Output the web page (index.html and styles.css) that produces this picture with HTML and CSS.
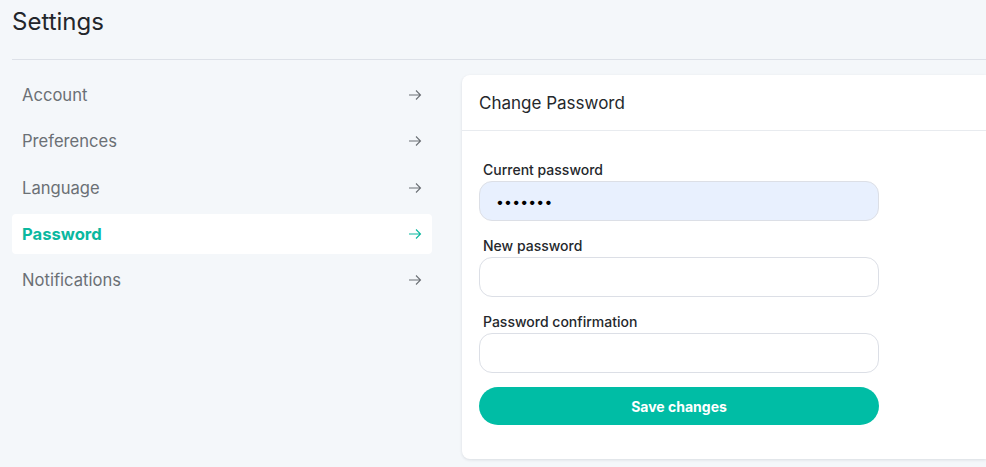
FILE: index.html
```html
<!DOCTYPE html>
<html>
<head>
<meta charset="utf-8">
<link rel="stylesheet" href="styles.css">
</head>
<body>
<header class="page-header"><h1 class="page-title">Settings</h1></header>
<main class="layout">
  <nav class="side-nav">
    <a class="nav-item">Account<svg class="arrow" viewBox="0 0 14 14"><path d="M1 7H12.5M8 2.5L12.5 7L8 11.5"/></svg></a>
    <a class="nav-item">Preferences<svg class="arrow" viewBox="0 0 14 14"><path d="M1 7H12.5M8 2.5L12.5 7L8 11.5"/></svg></a>
    <a class="nav-item">Language<svg class="arrow" viewBox="0 0 14 14"><path d="M1 7H12.5M8 2.5L12.5 7L8 11.5"/></svg></a>
    <a class="nav-item active">Password<svg class="arrow" viewBox="0 0 14 14"><path d="M1 7H12.5M8 2.5L12.5 7L8 11.5"/></svg></a>
    <a class="nav-item">Notifications<svg class="arrow" viewBox="0 0 14 14"><path d="M1 7H12.5M8 2.5L12.5 7L8 11.5"/></svg></a>
  </nav>
  <section class="card">
    <div class="card-header">Change Password</div>
    <form class="card-body">
      <div class="field">
        <label class="label">Current password</label>
        <div class="input filled">&bull;&bull;&bull;&bull;&bull;&bull;&bull;</div>
      </div>
      <div class="field">
        <label class="label">New password</label>
        <div class="input"></div>
      </div>
      <div class="field">
        <label class="label">Password confirmation</label>
        <div class="input"></div>
      </div>
      <button type="button" class="btn">Save changes</button>
    </form>
  </section>
</main>
</body>
</html>
```

FILE: styles.css
```css
* { box-sizing: border-box; }
html, body { margin: 0; padding: 0; }
body {
  background: #f4f7fa;
  font-family: Inter, "Noto Sans", sans-serif;
  color: #212529;
  width: 986px;
  height: 467px;
  overflow: hidden;
}
.page-header {
  margin-left: 12px;
  height: 60px;
  border-bottom: 1px solid #dde1e8;
  padding-top: 8px;
}
.page-title {
  margin: 0;
  font-size: 24px;
  line-height: 28px;
  font-weight: 400;
  color: #23262b;
}
.layout {
  display: grid;
  grid-template-columns: 420px 524px;
  column-gap: 30px;
  padding: 15px 0 0 12px;
  width: 986px;
}
.side-nav {
  display: flex;
  flex-direction: column;
  gap: 6.3px;
}
.nav-item {
  height: 40px;
  display: flex;
  align-items: center;
  justify-content: space-between;
  padding: 0 10px 0 10px;
  font-size: 16.6px;
  color: #6b7075;
  border-radius: 4px;
}
.nav-item.active {
  background: #fff;
  color: #0bb89f;
  font-weight: 700;
}
.arrow {
  width: 14px;
  height: 14px;
  fill: none;
  stroke: #6b7075;
  stroke-width: 1.1;
}
.nav-item.active .arrow { stroke: #0bb89f; }
.card {
  background: #fff;
  border-radius: 8px 0 0 8px;
  box-shadow: 0 1px 3px rgba(30, 40, 60, 0.12);
  height: 384px;
}
.card-header {
  height: 56px;
  border-bottom: 1px solid #e8ebef;
  padding: 0 17px;
  display: flex;
  align-items: center;
  font-size: 17px;
  color: #25282c;
}
.card-body {
  padding: 31px 17px 0 17px;
  width: 434px;
  display: flex;
  flex-direction: column;
}
.field {
  display: flex;
  flex-direction: column;
  margin-bottom: 17px;
}
.field:last-of-type { margin-bottom: 14px; }
.label {
  font-size: 14px;
  line-height: 16px;
  font-weight: 500;
  color: #25282c;
  padding-left: 4px;
  margin-bottom: 3px;
}
.input {
  height: 40px;
  border: 1px solid #dcdfe6;
  border-radius: 13px;
  background: #fff;
  padding: 0 16px;
  display: flex;
  align-items: center;
  font-size: 14px;
  letter-spacing: 0.2px;
  color: #000;
}
.input.filled { background: #e8f0fe; }
.btn {
  height: 38px;
  border: 0;
  border-radius: 19px;
  background: #00bda5;
  color: #fff;
  font-family: Inter, "Noto Sans", sans-serif;
  font-weight: 700;
  font-size: 14px;
}
```
